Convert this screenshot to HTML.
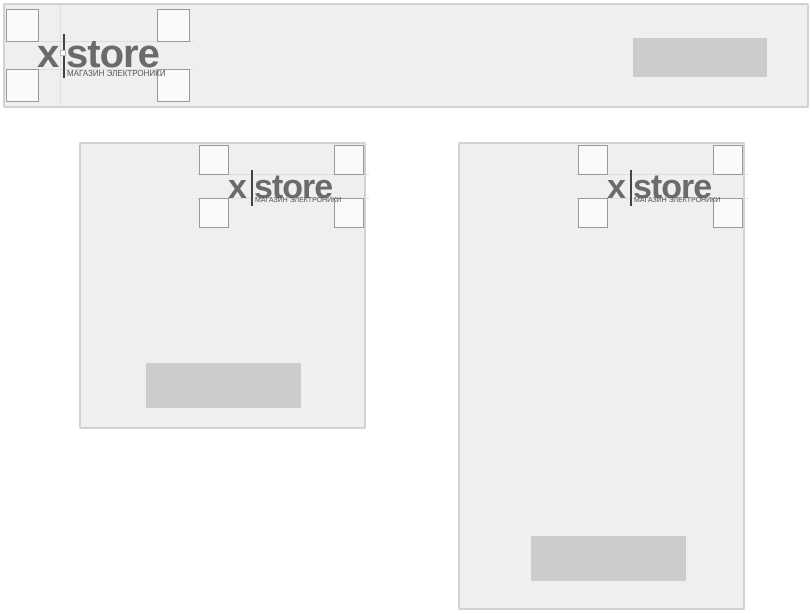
<!DOCTYPE html>
<html><head><meta charset="utf-8"><style>
body{margin:0;width:810px;height:614px;background:#fff;position:relative;overflow:hidden;font-family:"Liberation Sans",sans-serif}
.p{position:absolute;background:#efefef;border:2px solid #d2d2d2;box-sizing:border-box;border-radius:2px}
.g{position:absolute;background:#cccccc}
.sq{position:absolute;background:#fafafa;border:1px solid #9a9a9a;box-sizing:border-box}
.ln{position:absolute;background:#dedede}
.lg{position:absolute;color:#6b6b6b;font-weight:bold;white-space:nowrap}
.sub{position:absolute;color:#555;white-space:nowrap;letter-spacing:0}
.bar{position:absolute;background:#444}
</style></head><body>
<div class="p" style="left:3px;top:3px;width:806px;height:105px"></div>
<div class="g" style="left:633px;top:38px;width:134px;height:39px"></div>
<div class="ln" style="left:4px;top:41px;width:190px;height:1px"></div>
<div class="ln" style="left:4px;top:69px;width:190px;height:1px"></div>
<div class="ln" style="left:60px;top:5px;width:1px;height:100px"></div>
<div class="sq" style="left:6px;top:9px;width:33px;height:33px"></div>
<div class="sq" style="left:6px;top:69px;width:33px;height:33px"></div>
<div class="sq" style="left:157px;top:9px;width:33px;height:33px"></div>
<div class="sq" style="left:157px;top:69px;width:33px;height:33px"></div>
<div class="lg" style="left:37px;top:32px;font-size:40px;letter-spacing:-1px">x</div>
<div class="lg" style="left:66px;top:32px;font-size:40px;letter-spacing:-1px">store</div>
<div class="bar" style="left:63px;top:34px;width:2px;height:44px"></div>
<div class="sq" style="left:60px;top:50px;width:6px;height:6px;border-color:#bbb"></div>
<div class="sub" style="left:67px;top:69px;font-size:8px">МАГАЗИН ЭЛЕКТРОНИКИ</div>

<div class="p" style="left:79px;top:142px;width:287px;height:287px"></div>
<div class="g" style="left:146px;top:363px;width:155px;height:45px"></div>
<div class="ln" style="left:197px;top:174px;width:172px;height:1px"></div>
<div class="ln" style="left:197px;top:198px;width:172px;height:1px"></div>
<div class="sq" style="left:199px;top:145px;width:30px;height:30px"></div>
<div class="sq" style="left:199px;top:198px;width:30px;height:30px"></div>
<div class="sq" style="left:334px;top:145px;width:30px;height:30px"></div>
<div class="sq" style="left:334px;top:198px;width:30px;height:30px"></div>
<div class="lg" style="left:228px;top:168px;font-size:34px;letter-spacing:-1px">x</div>
<div class="lg" style="left:254px;top:168px;font-size:34px;letter-spacing:-1px">store</div>
<div class="bar" style="left:251px;top:170px;width:2px;height:36px"></div>
<div class="sub" style="left:255px;top:197px;font-size:7px">МАГАЗИН ЭЛЕКТРОНИКИ</div>

<div class="p" style="left:458px;top:142px;width:287px;height:468px"></div>
<div class="g" style="left:531px;top:536px;width:155px;height:45px"></div>
<div class="ln" style="left:576px;top:174px;width:172px;height:1px"></div>
<div class="ln" style="left:576px;top:198px;width:172px;height:1px"></div>
<div class="sq" style="left:578px;top:145px;width:30px;height:30px"></div>
<div class="sq" style="left:578px;top:198px;width:30px;height:30px"></div>
<div class="sq" style="left:713px;top:145px;width:30px;height:30px"></div>
<div class="sq" style="left:713px;top:198px;width:30px;height:30px"></div>
<div class="lg" style="left:607px;top:168px;font-size:34px;letter-spacing:-1px">x</div>
<div class="lg" style="left:633px;top:168px;font-size:34px;letter-spacing:-1px">store</div>
<div class="bar" style="left:630px;top:170px;width:2px;height:36px"></div>
<div class="sub" style="left:634px;top:197px;font-size:7px">МАГАЗИН ЭЛЕКТРОНИКИ</div>
</body></html>
